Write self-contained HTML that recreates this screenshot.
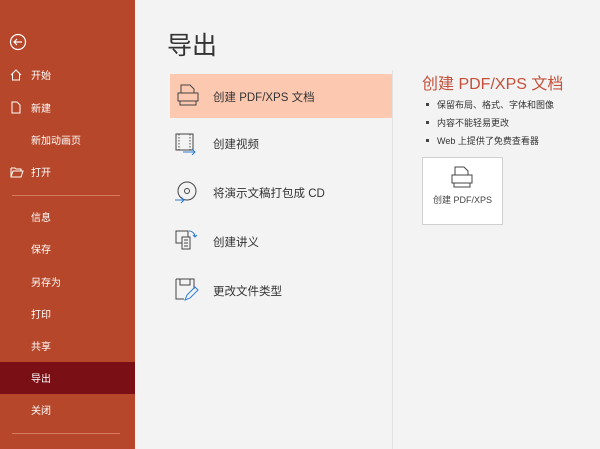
<!DOCTYPE html>
<html><head><meta charset="utf-8"><style>
*{margin:0;padding:0;box-sizing:border-box}
body{width:600px;height:449px;overflow:hidden;background:#f3f3f3;font-family:"Liberation Sans","Noto Sans CJK SC",sans-serif;position:relative;color:#333}
.side{position:absolute;left:0;top:0;width:135px;height:449px;background:#b7472a;color:#fff;font-size:10px}
.side .it{position:absolute;left:31px;margin-top:-2px}
.side .ic{position:absolute;left:10px}
.hr{position:absolute;left:12px;width:108px;height:1px;background:#d67a60}
.sel{position:absolute;left:0;top:362px;width:135px;height:32px;background:#7a1016}
h1{position:absolute;left:167px;top:26px;font-size:25px;font-weight:normal;color:#333}
.li{position:absolute;left:213px;font-size:11.5px;color:#333}
.hl{position:absolute;left:170px;top:74px;width:222px;height:44px;background:#fcc8b0}
.vl{position:absolute;left:392px;top:70px;width:1px;height:379px;background:#e2e2e2}
.rt{position:absolute;left:422px;top:70px;font-size:16px;color:#c5503a}
.b{position:absolute;font-size:9px;color:#333;padding-left:6px;left:431px}
.b:before{content:"";position:absolute;left:-5px;top:5px;width:3px;height:3px;background:#444}
.box{position:absolute;left:422px;top:157px;width:81px;height:68px;background:#fff;border:1px solid #d0d0d0}
</style></head><body>
<div class="side">
<svg class="ic" style="left:9px;top:33px" width="18" height="18" viewBox="0 0 18 18" fill="none" stroke="#fff" stroke-width="1.2"><circle cx="9" cy="9" r="7.5"/><path d="M13 9H5M8 6L5 9l3 3"/></svg>
<svg class="ic" style="top:69px" width="12" height="12" viewBox="0 0 12 12" fill="none" stroke="#fff"><path d="M1 6L6 1l5 5M2.5 5v6h7V5"/></svg>
<div class="it" style="top:69px">开始</div>
<svg class="ic" style="top:101px" width="12" height="13" viewBox="0 0 12 13" fill="none" stroke="#fff"><path d="M2 1h5l3 3v8H2z"/></svg>
<div class="it" style="top:102px">新建</div>
<div class="it" style="top:134px">新加动画页</div>
<svg class="ic" style="top:167px" width="14" height="11" viewBox="0 0 14 11" fill="none" stroke="#fff"><path d="M1 1h4l1 1h5v2M1 1v9h10l2-6H3l-2 6"/></svg>
<div class="it" style="top:166px">打开</div>
<div class="hr" style="top:195px"></div>
<div class="it" style="top:211px">信息</div>
<div class="it" style="top:243px">保存</div>
<div class="it" style="top:276px">另存为</div>
<div class="it" style="top:308px">打印</div>
<div class="it" style="top:340px">共享</div>
<div class="sel"></div>
<div class="it" style="top:372px">导出</div>
<div class="it" style="top:404px">关闭</div>
<div class="hr" style="top:433px"></div>
</div>
<h1>导出</h1>
<div class="hl"></div>
<div class="vl"></div>
<svg style="position:absolute;left:176px;top:84px" width="24" height="22" viewBox="0 0 24 22" fill="none" stroke="#444"><path d="M5 9V1h9l4 4v4M2 9h20v8H2zM4 17v4h16v-4"/></svg>
<div class="li" style="top:89px">创建 PDF/XPS 文档</div>
<svg style="position:absolute;left:175px;top:133px" width="24" height="22" viewBox="0 0 24 22" fill="none" stroke="#444"><rect x="1" y="1" width="17" height="16"/><path d="M4 1v16M15 1v16" stroke-dasharray="1.5 1.5"/><path d="M8 19h12M17 16l3 3-3 3" stroke="#2b7cd3"/></svg>
<div class="li" style="top:136px">创建视频</div>
<svg style="position:absolute;left:174px;top:180px" width="24" height="24" viewBox="0 0 24 24" fill="none" stroke="#444"><circle cx="13" cy="11" r="9"/><circle cx="13" cy="11" r="2.5"/><path d="M1 20h9M7 17l3 3-3 3" stroke="#2b7cd3"/></svg>
<div class="li" style="top:185px">将演示文稿打包成 CD</div>
<svg style="position:absolute;left:175px;top:228px" width="24" height="24" viewBox="0 0 24 24" fill="none" stroke="#444"><path d="M1 3h12v12H1z"/><rect x="7" y="9" width="8" height="12" fill="#f3f3f3"/><path d="M9 12h4M9 15h4M9 18h4"/><path d="M14 3a6 6 0 016 6M18 7l2 2 2-2" stroke="#2b7cd3"/></svg>
<div class="li" style="top:234px">创建讲义</div>
<svg style="position:absolute;left:175px;top:278px" width="24" height="24" viewBox="0 0 24 24" fill="none" stroke="#444"><path d="M1 1h18v10M1 1v20h8M5 1v6h10V1"/><path d="M10 22l2-5 8-8 3 3-8 8z" stroke="#2b7cd3"/></svg>
<div class="li" style="top:283px">更改文件类型</div>
<div class="rt">创建 PDF/XPS 文档</div>
<div class="b" style="top:98px">保留布局、格式、字体和图像</div>
<div class="b" style="top:116px">内容不能轻易更改</div>
<div class="b" style="top:134px">Web 上提供了免费查看器</div>
<div class="box">
<svg style="position:absolute;left:27px;top:8px" width="24" height="22" viewBox="0 0 24 22" fill="none" stroke="#444"><path d="M5 9V1h9l4 4v4M2 9h20v8H2zM4 17v4h16v-4"/></svg>
<div style="position:absolute;left:0;width:79px;top:35px;text-align:center;font-size:9px;color:#444">创建 PDF/XPS</div>
</div>
</body></html>
